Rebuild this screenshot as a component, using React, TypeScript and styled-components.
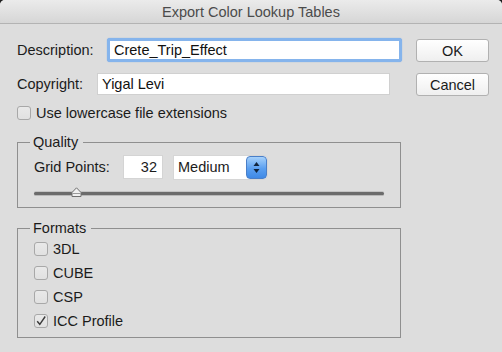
import React from "react";
import styled, { createGlobalStyle } from "styled-components";

const Global = createGlobalStyle`
  html, body { margin: 0; padding: 0; background: #1e1e1e; }
  body { font-family: "Liberation Sans", Arial, sans-serif; }
  * { box-sizing: border-box; }
`;

const Window = styled.div`
  width: 502px;
  height: 352px;
  background: #dddddd;
  border-radius: 5px 5px 0 0;
  overflow: hidden;
  display: flex;
  flex-direction: column;
  color: #1b1b1b;
  font-size: 14.5px;
`;

const TitleBar = styled.div`
  height: 24px;
  flex: none;
  display: flex;
  align-items: center;
  justify-content: center;
  background: linear-gradient(#ebebeb, #d6d6d6);
  border-bottom: 1px solid #b3b3b3;
  color: #4b4b4b;
  font-size: 14.5px;
  padding-top: 1px;
`;

const Body = styled.div`
  display: flex;
  padding: 14px 0 0 17px;
  gap: 14px;
`;

const Main = styled.div`
  width: 385px;
  display: flex;
  flex-direction: column;
`;

const Side = styled.div`
  display: flex;
  flex-direction: column;
  gap: 11px;
  padding-top: 1px;
`;

const Button = styled.div`
  width: 73px;
  height: 23px;
  display: flex;
  align-items: center;
  justify-content: center;
  background: linear-gradient(#ffffff, #efefef);
  border: 1px solid #b1b1b1;
  border-radius: 3px;
  color: #1b1b1b;
`;

const FieldRow = styled.div<{ $mt?: number }>`
  display: flex;
  align-items: center;
  margin-top: ${(p) => p.$mt ?? 0}px;
`;

const Label = styled.div<{ $w: number }>`
  width: ${(p) => p.$w}px;
  flex: none;
`;

const TextInput = styled.div<{ $w: number; $focus?: boolean; $h?: number }>`
  width: ${(p) => p.$w}px;
  height: ${(p) => p.$h ?? 22}px;
  background: #ffffff;
  display: flex;
  align-items: center;
  padding: 0 4px;
  border: ${(p) => (p.$focus ? "3px solid #85b4ec" : "1px solid #d0d0d0")};
  border-radius: ${(p) => (p.$focus ? "3px" : "0")};
  box-shadow: ${(p) => (p.$focus ? "0 0 1px 0 #6a9fe0" : "none")};
  color: #111;
`;

const CheckRow = styled.div<{ $mt?: number; $h?: number }>`
  display: flex;
  align-items: center;
  gap: 5px;
  height: ${(p) => p.$h ?? 14}px;
  margin-top: ${(p) => p.$mt ?? 0}px;
`;

const Box = styled.div`
  width: 14px;
  height: 14px;
  flex: none;
  border: 1px solid #a8a8a8;
  border-radius: 3px;
  background: linear-gradient(#e9e9e9, #e1e1e1);
  display: flex;
  align-items: center;
  justify-content: center;
`;

const Group = styled.fieldset<{ $mt: number; $pb: number }>`
  margin: ${(p) => p.$mt}px 0 0 0;
  width: 384px;
  border: 1px solid #8f8f8f;
  padding: 0 16px ${(p) => p.$pb}px 16px;
  min-width: 0;
`;

const Legend = styled.legend`
  padding: 0 5px 0 3px;
  margin-left: -4px;
  line-height: 17px;
`;

const NumInput = styled.div`
  width: 40px;
  height: 24px;
  background: #fff;
  border: 1px solid #d4d4d4;
  display: flex;
  align-items: center;
  justify-content: flex-end;
  padding-right: 5px;
`;

const Select = styled.div`
  margin-left: 11px;
  width: 93px;
  height: 23px;
  display: flex;
  background: #fff;
  border-radius: 0 4px 4px 0;
  box-shadow: 0 0 0 1px #d6d6d6;
`;

const SelectText = styled.div`
  flex: 1;
  display: flex;
  align-items: center;
  padding-left: 4px;
`;

const Stepper = styled.div`
  width: 21px;
  background: linear-gradient(#a6d1fb, #5a9ff0 55%, #3f89e6);
  border: 1px solid #4a7fc8;
  border-radius: 4px;
  display: flex;
  align-items: center;
  justify-content: center;
`;

const SliderArea = styled.div`
  position: relative;
  height: 14px;
  margin-top: 7px;
  display: flex;
  align-items: center;
`;

const Track = styled.div`
  flex: 1;
  height: 3px;
  border-radius: 2px;
  background: #6b6b6b;
  box-shadow: 0 1px 0 #b8b8b8, 0 -1px 0 #c4c4c4;
`;

const Thumb = styled.svg`
  position: absolute;
  left: 37px;
  top: 1px;
`;

const FormatList = styled.div`
  display: flex;
  flex-direction: column;
`;

const formats = [
  { name: "3DL", checked: false },
  { name: "CUBE", checked: false },
  { name: "CSP", checked: false },
  { name: "ICC Profile", checked: true },
];

export default function App() {
  return (
    <>
      <Global />
      <Window>
        <TitleBar>Export Color Lookup Tables</TitleBar>
        <Body>
          <Main>
            <FieldRow>
              <Label $w={90}>Description:</Label>
              <TextInput $w={295} $h={24} $focus>
                Crete_Trip_Effect
              </TextInput>
            </FieldRow>
            <FieldRow $mt={11}>
              <Label $w={80}>Copyright:</Label>
              <TextInput $w={293}>Yigal Levi</TextInput>
            </FieldRow>
            <CheckRow $mt={11}>
              <Box />
              <span>Use lowercase file extensions</span>
            </CheckRow>
            <Group $mt={14} $pb={7}>
              <Legend>Quality</Legend>
              <FieldRow $mt={4}>
                <Label $w={89}>Grid Points:</Label>
                <NumInput>32</NumInput>
                <Select>
                  <SelectText>Medium</SelectText>
                  <Stepper>
                    <svg width="7" height="13" viewBox="0 0 7 13">
                      <path d="M3.5 1 L6.5 5 L0.5 5 Z" fill="#10243d" />
                      <path d="M3.5 12 L6.5 8 L0.5 8 Z" fill="#10243d" />
                    </svg>
                  </Stepper>
                </Select>
              </FieldRow>
              <SliderArea>
                <Track />
                <Thumb width="11" height="11" viewBox="0 0 11 11">
                  <path
                    d="M5.5 0.8 L10 5.5 L10 9.5 L1 9.5 L1 5.5 Z"
                    fill="#f0f0f0"
                    stroke="#707070"
                    strokeWidth="1"
                  />
                  <line x1="1.5" y1="6.5" x2="9.5" y2="6.5" stroke="#9a9a9a" strokeWidth="1" />
                </Thumb>
              </SliderArea>
            </Group>
            <Group $mt={12} $pb={4}>
              <Legend>Formats</Legend>
              <FormatList>
                {formats.map((f) => (
                  <CheckRow key={f.name} $h={24}>
                    <Box>
                      {f.checked && (
                        <svg width="12" height="12" viewBox="0 0 12 12">
                          <path
                            d="M2.2 6.2 L4.8 9.3 L10.2 1.5"
                            fill="none"
                            stroke="#3a3a3a"
                            strokeWidth="1.4"
                          />
                        </svg>
                      )}
                    </Box>
                    <span>{f.name}</span>
                  </CheckRow>
                ))}
              </FormatList>
            </Group>
          </Main>
          <Side>
            <Button>OK</Button>
            <Button>Cancel</Button>
          </Side>
        </Body>
      </Window>
    </>
  );
}
